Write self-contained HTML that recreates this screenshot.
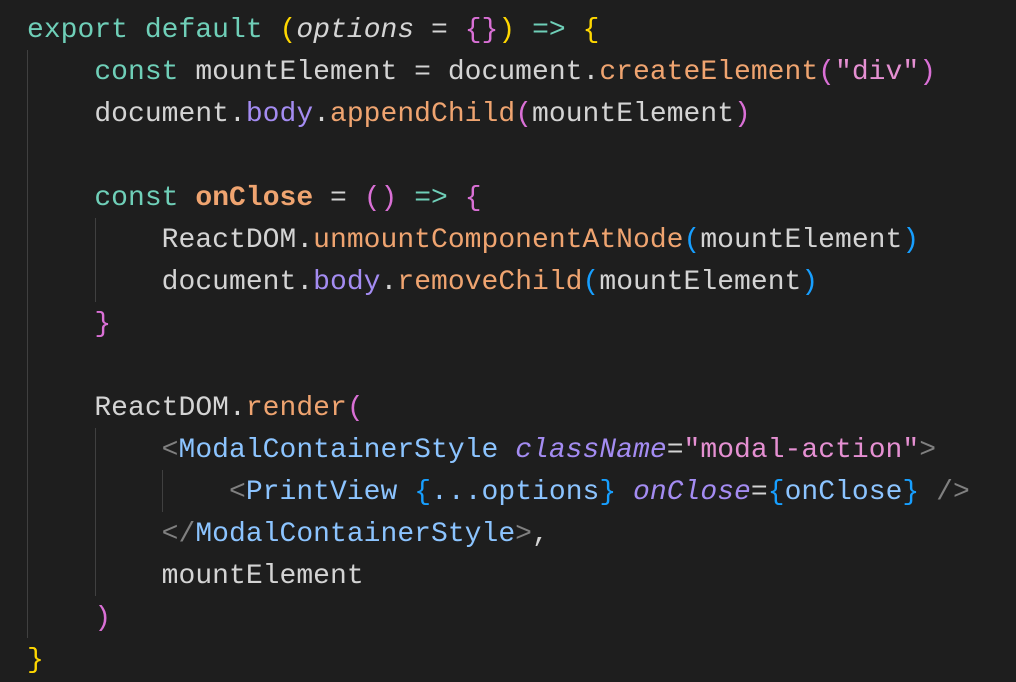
<!DOCTYPE html>
<html><head><meta charset="utf-8"><style>
html,body{margin:0;padding:0;background:#1e1e1e;width:1016px;height:680px;overflow:hidden}
pre{margin:0;position:absolute;left:27px;top:10px;font-family:"Liberation Mono","DejaVu Sans Mono",monospace;font-size:28px;line-height:42px;color:#d4d4d4;letter-spacing:0.03px}
.k{color:#6fcfb8}.f{color:#efa470}.p{color:#a48cf2}.s{color:#e590d2}.y{color:#ffd700}.m{color:#da70d6}.b{color:#179fff}.t{color:#8cc4ff}.g{color:#808080}.i{font-style:italic}.ip{font-style:italic;color:#a48cf2}
.guide{position:absolute;width:1px;background:#404040}
</style></head><body>
<div class="guide" style="left:27px;top:50px;height:588px"></div>
<div class="guide" style="left:95px;top:218px;height:84px"></div>
<div class="guide" style="left:95px;top:428px;height:168px"></div>
<div class="guide" style="left:162px;top:470px;height:42px"></div>
<pre><span class="k">export</span> <span class="k">default</span> <span class="y">(</span><span class="i">options</span> = <span class="m">{}</span><span class="y">)</span> <span class="k">=&gt;</span> <span class="y">{</span>
    <span class="k">const</span> mountElement = document.<span class="f">createElement</span><span class="m">(</span><span class="s">"div"</span><span class="m">)</span>
    document.<span class="p">body</span>.<span class="f">appendChild</span><span class="m">(</span>mountElement<span class="m">)</span>

    <span class="k">const</span> <span class="f" style="font-weight:bold">onClose</span> = <span class="m">()</span> <span class="k">=&gt;</span> <span class="m">{</span>
        ReactDOM.<span class="f">unmountComponentAtNode</span><span class="b">(</span>mountElement<span class="b">)</span>
        document.<span class="p">body</span>.<span class="f">removeChild</span><span class="b">(</span>mountElement<span class="b">)</span>
    <span class="m">}</span>

    ReactDOM.<span class="f">render</span><span class="m">(</span>
        <span class="g">&lt;</span><span class="t">ModalContainerStyle</span> <span class="ip">className</span>=<span class="s">"modal-action"</span><span class="g">&gt;</span>
            <span class="g">&lt;</span><span class="t">PrintView</span> <span class="b">{</span><span class="t">...options</span><span class="b">}</span> <span class="ip">onClose</span>=<span class="b">{</span><span class="t">onClose</span><span class="b">}</span> <span class="g">/&gt;</span>
        <span class="g">&lt;/</span><span class="t">ModalContainerStyle</span><span class="g">&gt;</span>,
        mountElement
    <span class="m">)</span>
<span class="y">}</span></pre>
</body></html>
